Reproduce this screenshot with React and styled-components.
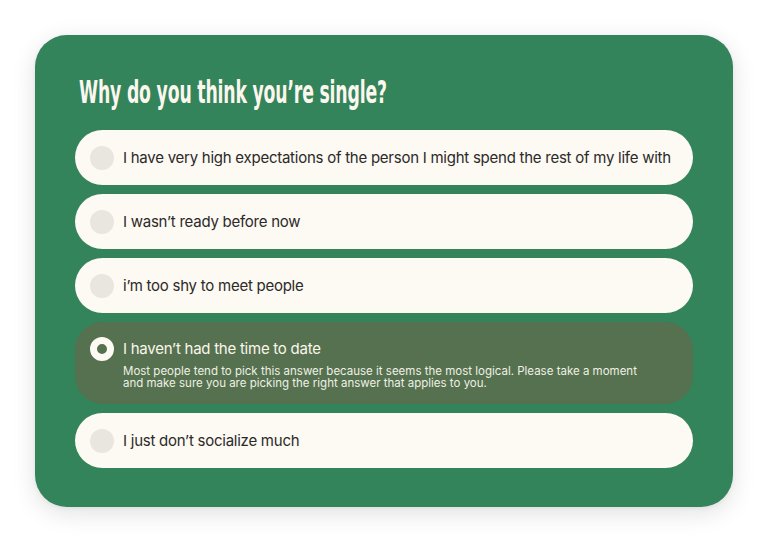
import React from "react";
import styled, { createGlobalStyle } from "styled-components";

const Global = createGlobalStyle`
  html, body { margin: 0; padding: 0; background: #ffffff; }
  body { font-family: Inter, "Liberation Sans", sans-serif; }
`;

const Page = styled.div`
  width: 768px;
  height: 543px;
  box-sizing: border-box;
  padding: 35px 35px 0 35px;
`;

const Card = styled.div`
  width: 698px;
  height: 472px;
  box-sizing: border-box;
  background: #33835b;
  border-radius: 32px;
  padding: 37px 40px 0 40px;
  box-shadow: 0 6px 24px rgba(0, 0, 0, 0.12), 0 1px 4px rgba(0, 0, 0, 0.06);
`;

const Title = styled.h1`
  margin: 0 0 18px 4px;
  font-family: "DejaVu Sans Condensed", "Liberation Sans", sans-serif;
  font-weight: 700;
  font-size: 32px;
  line-height: 40px;
  color: #fcf7ee;
  letter-spacing: -0.3px;
  white-space: nowrap;
  display: inline-block;
  transform: scaleX(0.6);
  transform-origin: left center;
`;

const List = styled.div`
  display: flex;
  flex-direction: column;
  gap: 9px;
`;

const Option = styled.div`
  display: flex;
  align-items: ${(p) => (p.$selected ? "flex-start" : "center")};
  gap: 9px;
  box-sizing: border-box;
  min-height: 55px;
  padding: ${(p) => (p.$selected ? "16px 20px 15px 15px" : "0 16px 0 15px")};
  border-radius: 28px;
  background: ${(p) => (p.$selected ? "#56714f" : "#fdf9f3")};
  color: ${(p) => (p.$selected ? "#fbf6ec" : "#2b2a28")};
`;

const Radio = styled.span`
  flex: none;
  width: 24px;
  height: 24px;
  border-radius: 50%;
  box-sizing: border-box;
  background: ${(p) => (p.$selected ? "#56714f" : "#e8e6df")};
  border: ${(p) => (p.$selected ? "7.5px solid #fdf9f3" : "none")};
  margin-top: ${(p) => (p.$selected ? "-1px" : "0")};
`;

const Body = styled.div`
  display: flex;
  flex-direction: column;
`;

const Label = styled.span`
  font-size: 15px;
  line-height: 22px;
  letter-spacing: -0.25px;
  white-space: nowrap;
`;

const Note = styled.p`
  margin: 5px 0 0 0;
  font-size: 11.5px;
  line-height: 12px;
  color: #eef0e4;
  max-width: 530px;
`;

const options = [
  "I have very high expectations of the person I might spend the rest of my life with",
  "I wasn\u2019t ready before now",
  "i\u2019m too shy to meet people",
  "I haven\u2019t had the time to date",
  "I just don\u2019t socialize much",
];

export default function App() {
  const selected = 3;
  return (
    <>
      <Global />
      <Page>
        <Card>
          <Title>Why do you think you’re single?</Title>
          <List>
            {options.map((o, i) => (
              <Option key={i} $selected={i === selected}>
                <Radio $selected={i === selected} />
                <Body>
                  <Label>{o}</Label>
                  {i === selected && (
                    <Note>
                      Most people tend to pick this answer because it seems the most
                      logical. Please take a moment and make sure you are picking the
                      right answer that applies to you.
                    </Note>
                  )}
                </Body>
              </Option>
            ))}
          </List>
        </Card>
      </Page>
    </>
  );
}
